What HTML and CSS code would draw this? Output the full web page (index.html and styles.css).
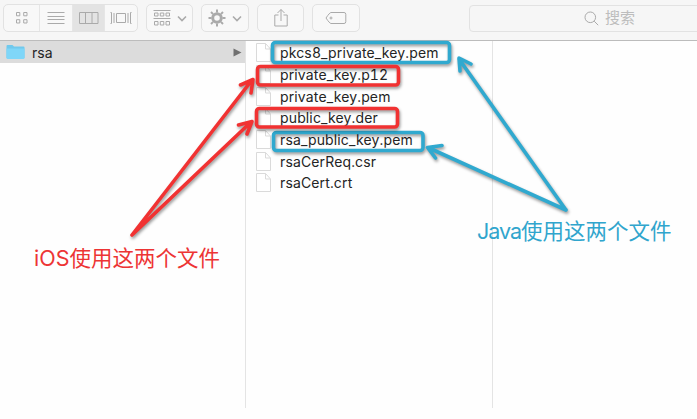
FILE: index.html
```html
<!DOCTYPE html>
<html lang="zh-CN">
<head>
<meta charset="utf-8">
<title>rsa</title>
<link rel="stylesheet" href="styles.css">
</head>
<body>
<svg class="symbols" width="0" height="0">
  <symbol id="doc" viewBox="0 0 15 19"><path d="M.5.500h9l5 5.500v12.500H.5zM9.500.5V6h5"/></symbol>
</svg>
<div class="finder">
  <header class="toolbar">
    <div class="group views">
      <span class="cell grid"><svg width="14" height="14" viewBox="0 0 14 14"><path d="M1.500 1.500h3.300v3.300H1.500zM8.700 1.500H12v3.300H8.700zM1.500 8.700h3.300V12H1.500zM8.700 8.700H12V12H8.700z"/></svg></span>
      <span class="cell"><svg width="18" height="14" viewBox="0 0 18 14"><path d="M.5 1.500h17M.5 5.500h17M.5 8.500h17M.5 12.500h17"/></svg></span>
      <span class="cell active"><svg width="20" height="14" viewBox="0 0 20 14"><path d="M.5 1.500h18.500v11H.5zM6.500 1.500v11M13 1.500v11"/></svg></span>
      <span class="cell"><svg width="22" height="14" viewBox="0 0 22 14"><path d="M6.500 2.500h9v9h-9zM.5 1.500h1v11h-1M4 2v10M21.500 1.500h-1v11h1M18 2v10"/></svg></span>
    </div>
    <div class="group arrange">
      <svg width="18" height="18" viewBox="0 0 18 18"><path d="M.5 1.500h17M.5 9.500h17M1.500 4h3.500v3H1.500zM7.300 4h3.500v3H7.300zM13 4h3.500v3H13zM1.500 12.500h3.500v3.500H1.500zM7.300 12.500h3.500v3.500H7.300zM13 12.500h3.500v3.500H13z"/></svg>
      <svg class="chevron" width="10" height="7" viewBox="0 0 10 7"><path d="M1 1.500l4 4 4-4"/></svg>
    </div>
    <div class="group action">
      <svg width="18" height="18" viewBox="0 0 18 18"><circle class="gear-ring" cx="9" cy="9" r="4.300"/><path class="gear-teeth" d="M9 .5v3M9 14.500v3M.5 9h3M14.500 9h3M3 3l2.100 2.100M12.900 12.900L15 15M15 3l-2.100 2.100M5.100 12.900L3 15"/></svg>
      <svg class="chevron" width="10" height="7" viewBox="0 0 10 7"><path d="M1 1.500l4 4 4-4"/></svg>
    </div>
    <div class="group share">
      <svg width="16" height="20" viewBox="0 0 16 20"><path d="M5.500 7H1.800v11h12.400V7h-3.700M8 13V1.500M4.500 5L8 1.500 11.500 5"/></svg>
    </div>
    <div class="group tags">
      <svg width="22" height="14" viewBox="0 0 22 14"><path d="M6 1.500h13q1.800 0 1.800 1.800v7.400q0 1.800-1.800 1.800H6Q4.700 12.500 1 7 4.700 1.500 6 1.500z"/><circle cx="6" cy="7" r="1"/></svg>
    </div>
    <div class="search">
      <svg width="15" height="15" viewBox="0 0 15 15"><circle cx="6.300" cy="6.300" r="5.300"/><path d="M10.200 10.200l4 4"/></svg>
      <span>搜索</span>
    </div>
  </header>
  <main class="columns">
    <section class="column first">
      <div class="folder-row">
        <svg width="19" height="16" viewBox="0 0 19 16"><path class="folder-back" d="M.5 2Q.5 1 1.500 1h5l1.500 1.500h9.500q1 0 1 1V14H.5z"/><path class="folder-front" d="M.5 4.500h18V14q0 1-1 1h-16q-1 0-1-1z"/></svg>
        <span class="folder-name">rsa</span>
        <svg class="disclosure" width="9" height="9" viewBox="0 0 9 9"><path d="M.5.500l8 4-8 4z"/></svg>
      </div>
    </section>
    <section class="column second">
      <div class="file"><svg class="doc"><use href="#doc"/></svg><span>pkcs8_private_key.pem</span></div>
      <div class="file"><svg class="doc"><use href="#doc"/></svg><span>private_key.p12</span></div>
      <div class="file"><svg class="doc"><use href="#doc"/></svg><span>private_key.pem</span></div>
      <div class="file"><svg class="doc"><use href="#doc"/></svg><span>public_key.der</span></div>
      <div class="file"><svg class="doc"><use href="#doc"/></svg><span>rsa_public_key.pem</span></div>
      <div class="file"><svg class="doc"><use href="#doc"/></svg><span>rsaCerReq.csr</span></div>
      <div class="file"><svg class="doc"><use href="#doc"/></svg><span>rsaCert.crt</span></div>
    </section>
    <section class="column"></section>
  </main>
  <svg class="marks" width="697" height="419" viewBox="0 0 697 419">
    <g class="blue">
      <rect x="272.500" y="42.500" width="177" height="20" rx="3"/>
      <rect x="273.500" y="132.500" width="149.500" height="18" rx="3"/>
      <path d="M566 210L459 59M460 71l-1-13 12 6M566 210L429 148M435.500 158l-8-10.500 14.500-2"/>
    </g>
    <g class="red">
      <rect x="257.500" y="66.500" width="141" height="18.500" rx="3"/>
      <rect x="256.500" y="108.500" width="141" height="18.500" rx="3"/>
      <path d="M132 235L252 80M240.500 85L253 79.500l-2 13.500M132 235L251 122M238.500 125L252 121.500l-5 12.500"/>
    </g>
  </svg>
  <div class="label ios">iOS使用这两个文件</div>
  <div class="label java"><span class="latin">Java</span>使用这两个文件</div>
</div>
</body>
</html>
```
FILE: styles.css
```css
* { box-sizing: border-box; }
body {
  margin: 0;
  background: #fefefe;
  font-family: Inter, "Noto Sans CJK SC", sans-serif;
  color: #242424;
}
.symbols { position: absolute; }
.finder {
  position: relative;
  width: 697px;
  height: 419px;
  overflow: hidden;
}
svg { display: block; fill: none; stroke: #aaa; stroke-width: 1; flex: none; }
.toolbar {
  display: flex;
  align-items: flex-start;
  height: 41px;
  padding: 4px 0 0 3px;
  background: #f6f6f6;
  border-bottom: 1px solid #bcbcbc;
}
.group {
  display: flex;
  flex: none;
  align-items: center;
  justify-content: center;
  height: 28px;
  border: 1px solid #e2e2e2;
  border-radius: 5px;
  background: #f8f8f8;
}
.views { width: 135px; overflow: hidden; }
.cell {
  display: flex;
  flex: 1;
  height: 100%;
  align-items: center;
  justify-content: center;
  border-left: 1px solid #e6e6e6;
}
.grid { flex: 0 0 35px; border-left: 0; }
.active { background: #e3e3e3; }
.arrange { width: 47px; margin-left: 8px; gap: 6px; }
.action { width: 48px; margin-left: 8px; gap: 6px; }
.share { width: 47px; margin-left: 8px; }
.tags { width: 48px; margin-left: 8px; }
.chevron { stroke-width: 1.6; }
.gear-ring { stroke-width: 3; }
.gear-teeth { stroke-width: 2; }
.search {
  display: flex;
  align-items: center;
  width: 240px;
  height: 27px;
  margin: 1px 0 0 109px;
  padding-left: 114px;
  gap: 6px;
  flex: none;
  border: 1px solid #e2e2e2;
  border-radius: 4px;
  color: #bdbdbd;
  font-size: 15px;
  line-height: 20px;
}
.search span { margin-top: -2px; }
.columns { display: flex; height: 367px; }
.column { flex: 1; }
.first, .second { border-right: 1px solid #e4e4e4; }
.first { flex: 0 0 246px; }
.second { flex: 0 0 247px; padding: 1px 0 0 10px; }
.folder-row {
  display: flex;
  align-items: center;
  height: 22px;
  padding: 0 3px 0 6px;
  background: #dcdcdc;
  font-size: 14px;
}
.folder-name { flex: 1; margin-left: 7px; }
.folder-back { fill: #70c9ed; stroke: none; }
.folder-front { fill: #7fd6f8; stroke: none; }
.disclosure { fill: #707070; stroke: none; }
.file {
  display: flex;
  align-items: center;
  height: 21.7px;
  font-size: 14px;
  letter-spacing: .14px;
  font-variant-numeric: tabular-nums;
}
.doc {
  width: 15px;
  height: 19px;
  margin-right: 9px;
  fill: #fff;
  stroke: #dadada;
}
.marks { position: absolute; left: 0; top: 0; }
.marks g {
  stroke-width: 3.6;
  stroke-linecap: round;
  stroke-linejoin: round;
  filter: drop-shadow(1px 2px 1.5px rgba(0, 0, 0, .4));
}
.blue { stroke: #30a9cf; }
.red { stroke: #f13232; }
.label {
  position: absolute;
  font-size: 21.5px;
  line-height: 28px;
  white-space: nowrap;
}
.latin { letter-spacing: -1px; }
.ios { left: 34px; top: 244px; color: #ed3434; }
.java { left: 477px; top: 217px; color: #30a5cd; }
```
